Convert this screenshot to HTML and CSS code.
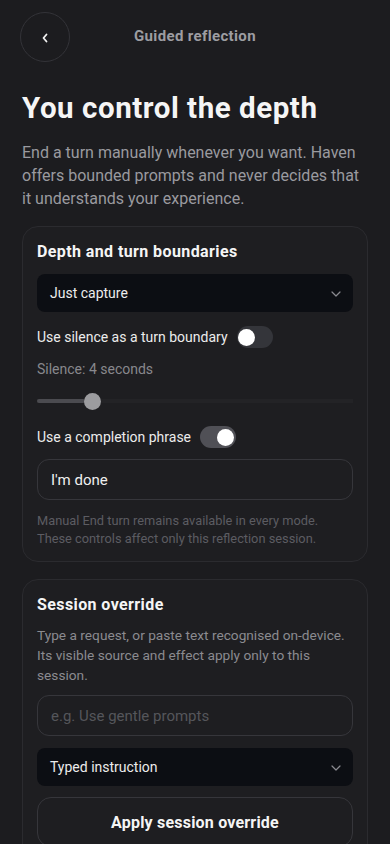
FILE: index.html
```html
<!DOCTYPE html>
<html lang="en">
<head>
<meta charset="utf-8">
<meta name="viewport" content="width=device-width, initial-scale=1">
<title>Guided reflection</title>
<link rel="stylesheet" href="styles.css">
</head>
<body>
<div class="page">
  <header class="topbar">
    <button class="back" aria-label="Back">
      <svg width="10" height="12" viewBox="0 0 10 12"><path d="M6.5 2.5 L3.5 6 L6.5 9.5" fill="none" stroke="#f2f2f2" stroke-width="1.8" stroke-linecap="round" stroke-linejoin="round"/></svg>
    </button>
    <div class="topbar-title">Guided reflection</div>
    <div class="spacer"></div>
  </header>

  <h1 class="heading">You control the depth</h1>
  <p class="lead">End a turn manually whenever you want. Haven offers bounded prompts and never decides that it understands your experience.</p>

  <section class="card card-depth">
    <h2 class="card-title">Depth and turn boundaries</h2>
    <div class="select sel-1">
      <span>Just capture</span>
      <svg class="chev" width="10" height="6" viewBox="0 0 10 6"><path d="M1 1 L5 5 L9 1" fill="none" stroke="#8a8a90" stroke-width="1.2" stroke-linecap="round" stroke-linejoin="round"/></svg>
    </div>
    <div class="toggle-row row-silence">
      <span class="toggle-label">Use silence as a turn boundary</span>
      <span class="toggle off"><span class="knob"></span></span>
    </div>
    <div class="muted-label">Silence: 4 seconds</div>
    <div class="slider">
      <div class="slider-fill"></div>
      <div class="slider-thumb"></div>
    </div>
    <div class="toggle-row row-phrase">
      <span class="toggle-label">Use a completion phrase</span>
      <span class="toggle on"><span class="knob"></span></span>
    </div>
    <div class="input input-1"><span class="value">I'm done</span></div>
    <p class="note">Manual End turn remains available in every mode. These controls affect only this reflection session.</p>
  </section>

  <section class="card card-override">
    <h2 class="card-title">Session override</h2>
    <p class="desc">Type a request, or paste text recognised on-device. Its visible source and effect apply only to this session.</p>
    <div class="input input-2"><span class="placeholder">e.g. Use gentle prompts</span></div>
    <div class="select sel-2">
      <span>Typed instruction</span>
      <svg class="chev" width="10" height="6" viewBox="0 0 10 6"><path d="M1 1 L5 5 L9 1" fill="none" stroke="#8a8a90" stroke-width="1.2" stroke-linecap="round" stroke-linejoin="round"/></svg>
    </div>
    <button class="apply">Apply session override</button>
  </section>
</div>
</body>
</html>
```

FILE: styles.css
```css
* { box-sizing: border-box; }
html, body {
  margin: 0;
  padding: 0;
  background: #1c1c1f;
  height: 844px;
  overflow: hidden;
}
body {
  font-family: Roboto, "Noto Sans", sans-serif;
  color: #f2f2f2;
}
.page {
  padding: 12px 22px 0;
  display: flex;
  flex-direction: column;
}
.topbar {
  display: grid;
  grid-template-columns: 50px 1fr 50px;
  align-items: center;
  height: 50px;
  margin-left: -2px;
}
.back {
  width: 50px;
  height: 50px;
  border-radius: 50%;
  border: 1px solid #333338;
  background: transparent;
  display: flex;
  align-items: center;
  justify-content: center;
  padding: 0;
  padding-top: 2px;
}
.topbar-title {
  text-align: center;
  font-size: 15px;
  font-weight: 700;
  letter-spacing: 0.35px;
  color: #9d9da2;
  margin-top: -2px;
  margin-left: 2px;
}
.heading {
  margin: 29px 0 0;
  font-size: 29.5px;
  line-height: 34px;
  font-weight: 700;
  letter-spacing: 0.55px;
  color: #f5f5f5;
}
.lead {
  margin: 16px 0 0;
  font-size: 16px;
  line-height: 23px;
  color: #9a9a9f;
}
.card {
  border: 1px solid #2b2b2f;
  border-radius: 16px;
  background: #1e1e21;
  padding: 15px 14px 13px;
  display: flex;
  flex-direction: column;
}
.card-depth { margin-top: 16px; }
.card-override { margin-top: 17px; padding-top: 15px; }
.card-title {
  margin: 0;
  font-size: 16px;
  line-height: 20px;
  font-weight: 700;
  letter-spacing: 0.4px;
  color: #f5f5f5;
}
.select {
  height: 38px;
  border-radius: 8px;
  background: #0c0e13;
  display: flex;
  align-items: center;
  justify-content: space-between;
  padding: 0 12px 0 13px;
  font-size: 14px;
  color: #ececec;
}
.sel-1 { margin-top: 12px; }
.sel-2 { margin-top: 12px; }
.chev { margin-top: 1px; }
.toggle-row {
  display: flex;
  align-items: center;
  gap: 9px;
  height: 22px;
}
.row-silence { margin-top: 14px; }
.row-phrase { margin-top: 16px; }
.toggle-label {
  font-size: 14px;
  color: #ececec;
}
.toggle {
  width: 36px;
  height: 22px;
  border-radius: 11px;
  display: flex;
  align-items: center;
  padding: 0 3px;
}
.toggle .knob {
  width: 17px;
  height: 17px;
  border-radius: 50%;
  background: #ffffff;
}
.toggle.off { background: #34353a; justify-content: flex-start; padding-left: 1px; }
.toggle.on { background: #505056; justify-content: flex-end; padding-right: 2px; }
.muted-label {
  margin-top: 11px;
  font-size: 14px;
  line-height: 20px;
  color: #88888d;
}
.slider {
  margin-top: 13px;
  height: 18px;
  display: flex;
  align-items: center;
  background: linear-gradient(#232326, #232326) no-repeat left center / 100% 4px;
}
.slider-fill {
  width: 48px;
  height: 4px;
  border-radius: 2px;
  background: #4b4b50;
}
.slider-thumb {
  width: 17px;
  height: 17px;
  border-radius: 50%;
  background: #9c9c9f;
  margin-left: -1px;
}
.input {
  height: 41px;
  border: 1px solid #36363b;
  border-radius: 12px;
  display: flex;
  align-items: center;
  padding: 0 13px;
  font-size: 15px;
}
.input-1 { margin-top: 11px; }
.input-2 { margin-top: 10px; }
.input .value { color: #f0f0f0; }
.input .placeholder { color: #55565b; }
.note {
  margin: 12px 0 0;
  font-size: 12.8px;
  line-height: 18px;
  color: #5c5c62;
}
.desc {
  margin: 10px 0 0;
  font-size: 13.7px;
  line-height: 20px;
  color: #8b8b90;
}
.apply {
  margin-top: 11px;
  height: 50px;
  border: 1px solid #36363b;
  border-radius: 14px;
  background: transparent;
  color: #f5f5f5;
  font-family: inherit;
  font-size: 16px;
  font-weight: 700;
  letter-spacing: 0.2px;
}
```
